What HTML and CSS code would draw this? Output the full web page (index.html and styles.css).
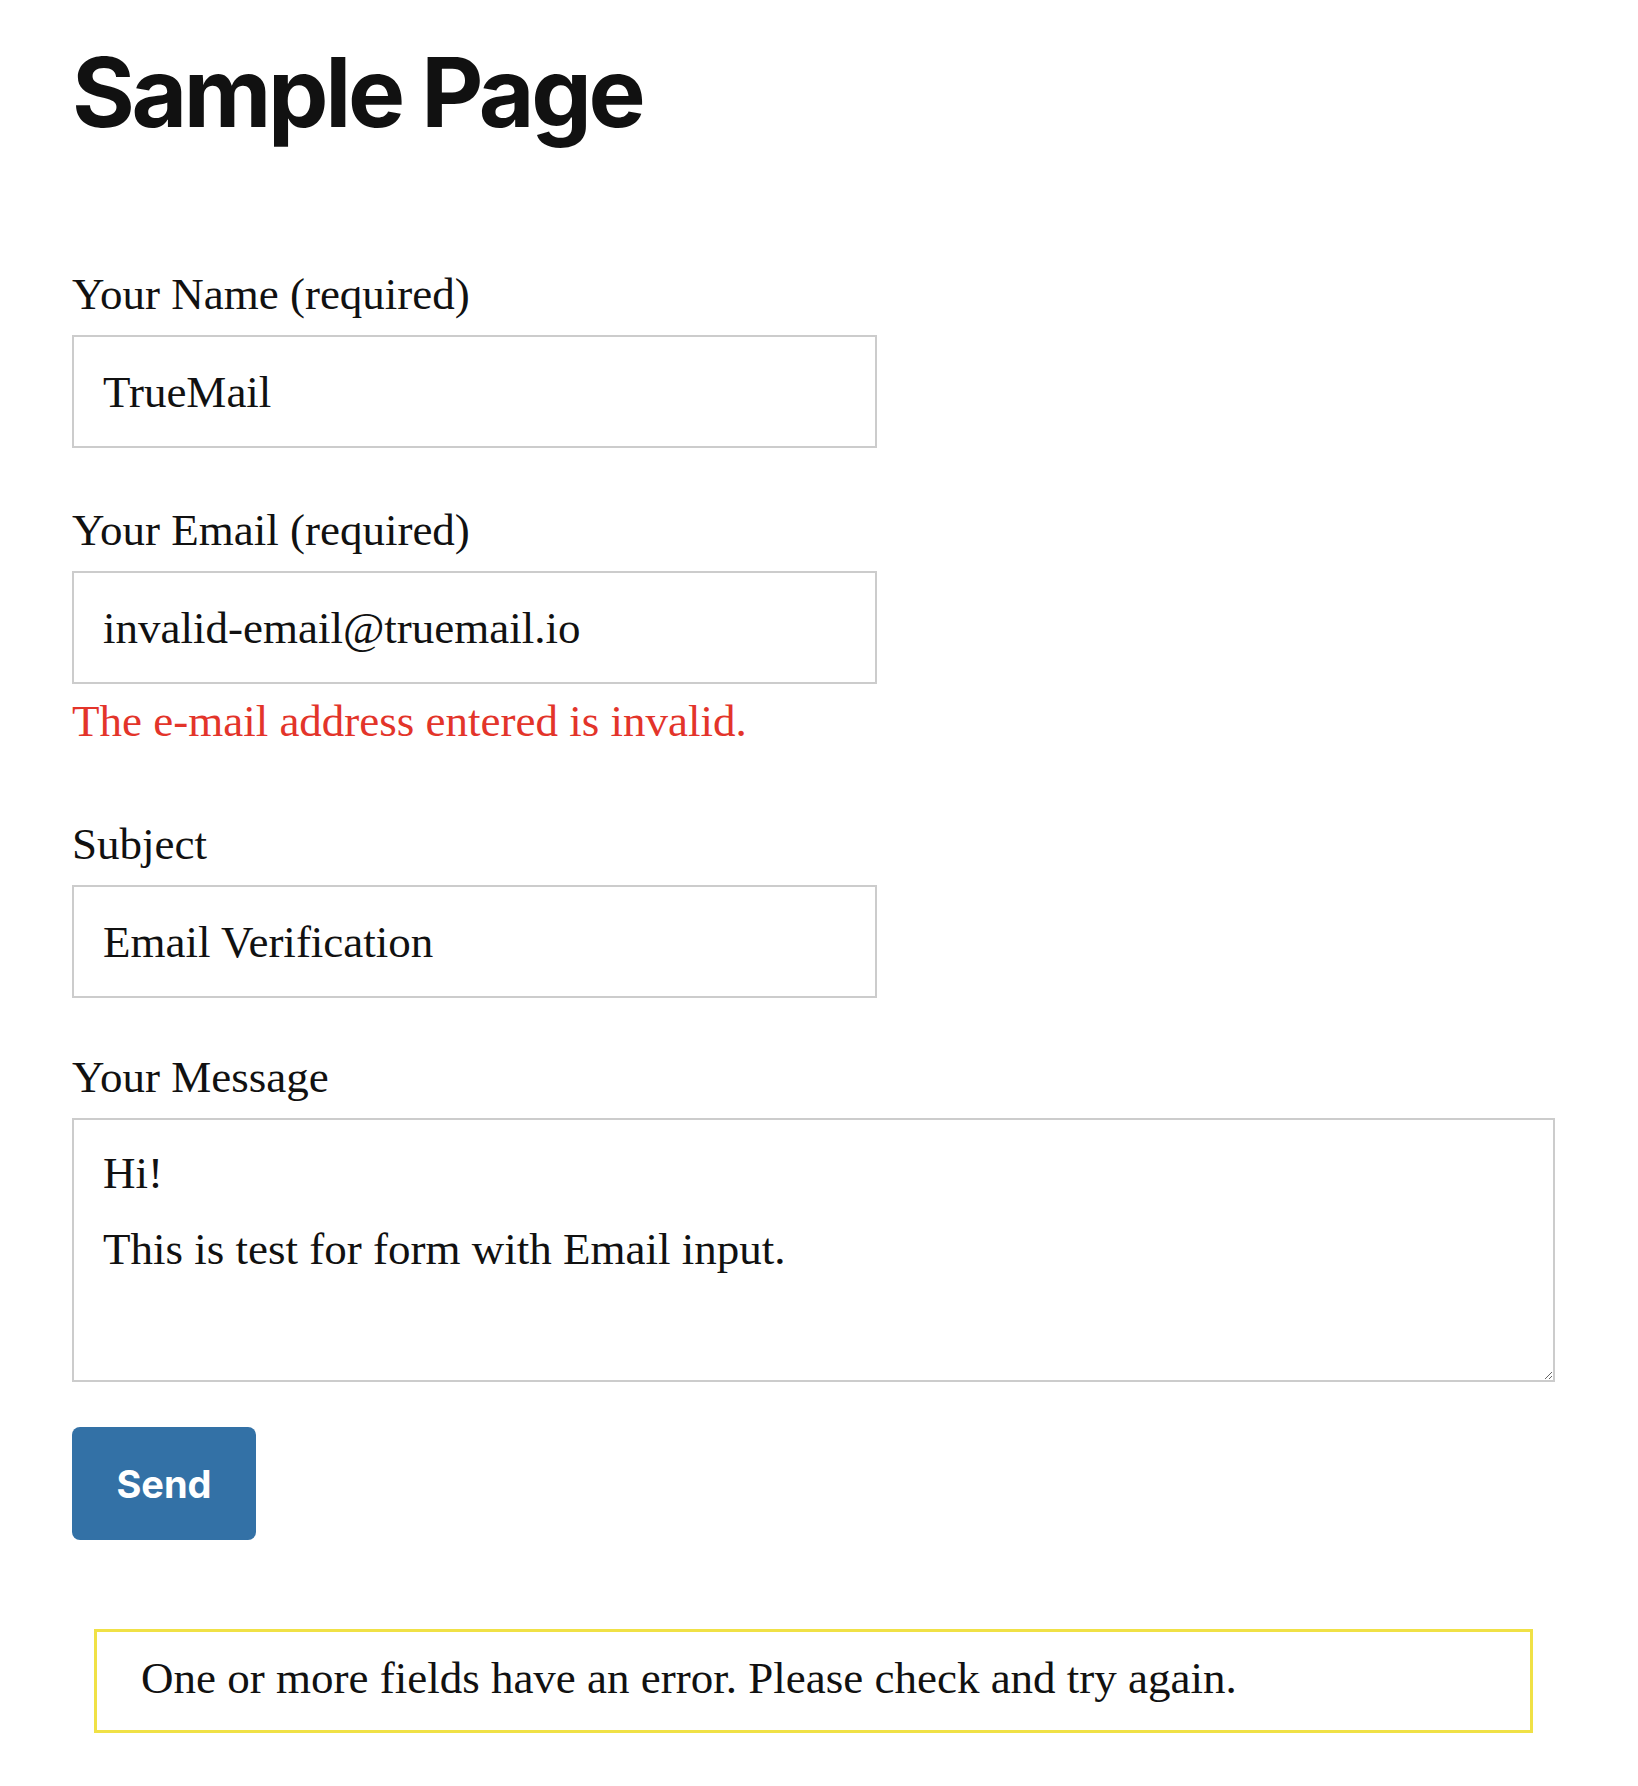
FILE: index.html
```html
<!DOCTYPE html>
<html lang="en">
<head>
<meta charset="utf-8">
<title>Sample Page</title>
<link rel="stylesheet" href="styles.css">
</head>
<body>
<main class="page">
  <h1 class="title">Sample Page</h1>
  <form class="form">
    <div class="field">
      <label class="label" for="name">Your Name (required)</label>
      <input class="input" id="name" type="text" value="TrueMail">
    </div>
    <div class="field">
      <label class="label" for="email">Your Email (required)</label>
      <input class="input" id="email" type="email" value="invalid-email@truemail.io">
      <span class="error">The e-mail address entered is invalid.</span>
    </div>
    <div class="field field-subject">
      <label class="label" for="subject">Subject</label>
      <input class="input" id="subject" type="text" value="Email Verification">
    </div>
    <div class="field field-message">
      <label class="label" for="message">Your Message</label>
      <textarea class="textarea" id="message">Hi!
This is test for form with Email input.</textarea>
    </div>
    <div class="actions">
      <button class="send" type="button">Send</button>
    </div>
    <div class="response">One or more fields have an error. Please check and try again.</div>
  </form>
</main>
</body>
</html>
```

FILE: styles.css
```css
html, body {
  margin: 0;
  padding: 0;
  background: #fff;
}

.page {
  padding: 44px 83px 40px 72px;
  color: #111;
  font-family: "Liberation Serif", "Times New Roman", serif;
  font-size: 45px;
  line-height: 55px;
}

.title {
  margin: 0;
  font-family: Inter, "Liberation Sans", sans-serif;
  font-weight: 700;
  font-size: 96px;
  line-height: 1;
  letter-spacing: -0.035em;
  color: #111;
}

.form {
  margin-top: 127px;
  display: flex;
  flex-direction: column;
}

.field {
  display: flex;
  flex-direction: column;
  align-items: flex-start;
  margin-bottom: 55px;
}

.field-subject {
  margin-bottom: 52px;
}

.field-message {
  margin-bottom: 45px;
}

.label {
  display: block;
  margin-bottom: 13px;
  color: #111;
}

.input,
.textarea {
  box-sizing: border-box;
  border: 2px solid #cccccc;
  border-radius: 0;
  background: #fff;
  color: #111;
  font-family: "Liberation Serif", "Times New Roman", serif;
  font-size: 45px;
  margin: 0;
  outline: none;
}

.input {
  width: 805px;
  height: 113px;
  padding: 0 29px;
  line-height: normal;
}

.textarea {
  width: 100%;
  height: 264px;
  padding: 15px 29px;
  line-height: 76px;
  resize: vertical;
  overflow: hidden;
}

.error {
  display: block;
  margin-top: 10px;
  margin-bottom: 13px;
  color: #e3342a;
}

.actions {
  display: flex;
}

.send {
  width: 184px;
  height: 113px;
  border: none;
  border-radius: 8px;
  background: #3371a6;
  color: #fff;
  font-family: Inter, "Liberation Sans", sans-serif;
  font-weight: 700;
  font-size: 38px;
  padding: 0;
  cursor: pointer;
}

.response {
  margin: 89px 22px 0 22px;
  border: 3px solid #f0e146;
  padding: 19px 44px 24px 44px;
  color: #111;
}
```
